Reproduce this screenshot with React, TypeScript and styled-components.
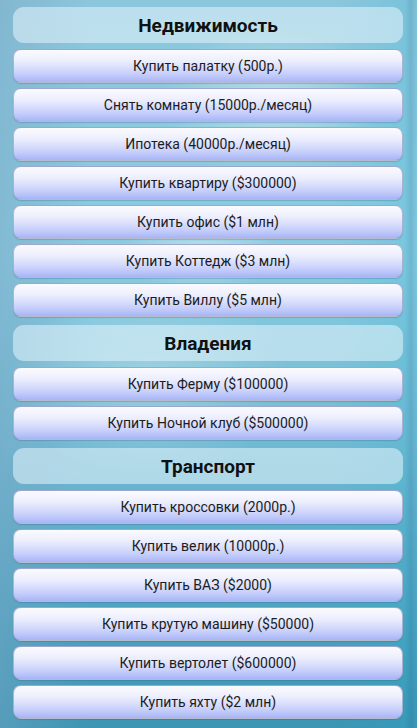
import React from "react";
import styled, { createGlobalStyle } from "styled-components";

const Global = createGlobalStyle`
  html, body { margin: 0; padding: 0; }
  body { width: 417px; height: 728px; overflow: hidden; font-family: Roboto, "Noto Sans", sans-serif; }
`;

const Screen = styled.div`
  width: 417px;
  height: 728px;
  box-sizing: border-box;
  padding: 4px 14px 0 13px;
  display: flex;
  flex-direction: column;
  gap: 5px;
  background:
    radial-gradient(ellipse 120px 50px at 200px 255px, rgba(255,255,255,0.45), rgba(255,255,255,0) 70%),
    radial-gradient(ellipse 160px 110px at 270px 100px, rgba(255,255,255,0.35), rgba(255,255,255,0) 70%),
    radial-gradient(ellipse 200px 140px at 150px 380px, rgba(255,255,255,0.25), rgba(255,255,255,0) 70%),
    linear-gradient(90deg, rgba(120,165,195,0.45) 0%, rgba(120,170,200,0) 22%, rgba(0,0,0,0) 80%, rgba(40,180,210,0.18) 97%, rgba(30,120,160,0.25) 98.5%, rgba(40,170,200,0.1) 100%),
    linear-gradient(180deg, #8cc6dc 0%, #8acce1 35%, #72bad3 60%, #4ca3c0 85%, #3b95b3 100%);
`;

const Header = styled.div`
  height: 36px;
  flex-shrink: 0;
  margin: 3px 0 1px;
  border-radius: 11px;
  background: rgba(222, 240, 248, 0.6);
  display: flex;
  align-items: center;
  justify-content: center;
  font-weight: 700;
  font-size: 19px;
  color: #111;
`;

const Button = styled.div`
  height: 34px;
  flex-shrink: 0;
  box-sizing: border-box;
  border-radius: 8px;
  border: 1px solid rgba(150, 160, 190, 0.7);
  background: linear-gradient(180deg, #fbfbff 0%, #eceefd 35%, #c6cffb 75%, #a8b5f6 100%);
  box-shadow: 0 1px 1px rgba(40, 80, 110, 0.25);
  display: flex;
  align-items: center;
  justify-content: center;
  font-size: 14px;
  color: #1c1c1c;
`;

const sections: { title: string; items: string[] }[] = [
  {
    title: "Недвижимость",
    items: [
      "Купить палатку (500р.)",
      "Снять комнату (15000р./месяц)",
      "Ипотека (40000р./месяц)",
      "Купить квартиру ($300000)",
      "Купить офис ($1 млн)",
      "Купить Коттедж ($3 млн)",
      "Купить Виллу ($5 млн)",
    ],
  },
  {
    title: "Владения",
    items: ["Купить Ферму ($100000)", "Купить Ночной клуб ($500000)"],
  },
  {
    title: "Транспорт",
    items: [
      "Купить кроссовки (2000р.)",
      "Купить велик (10000р.)",
      "Купить ВАЗ ($2000)",
      "Купить крутую машину ($50000)",
      "Купить вертолет ($600000)",
      "Купить яхту ($2 млн)",
    ],
  },
];

export default function App() {
  return (
    <>
      <Global />
      <Screen>
        {sections.map((s) => (
          <React.Fragment key={s.title}>
            <Header>{s.title}</Header>
            {s.items.map((it) => (
              <Button key={it}>{it}</Button>
            ))}
          </React.Fragment>
        ))}
      </Screen>
    </>
  );
}
